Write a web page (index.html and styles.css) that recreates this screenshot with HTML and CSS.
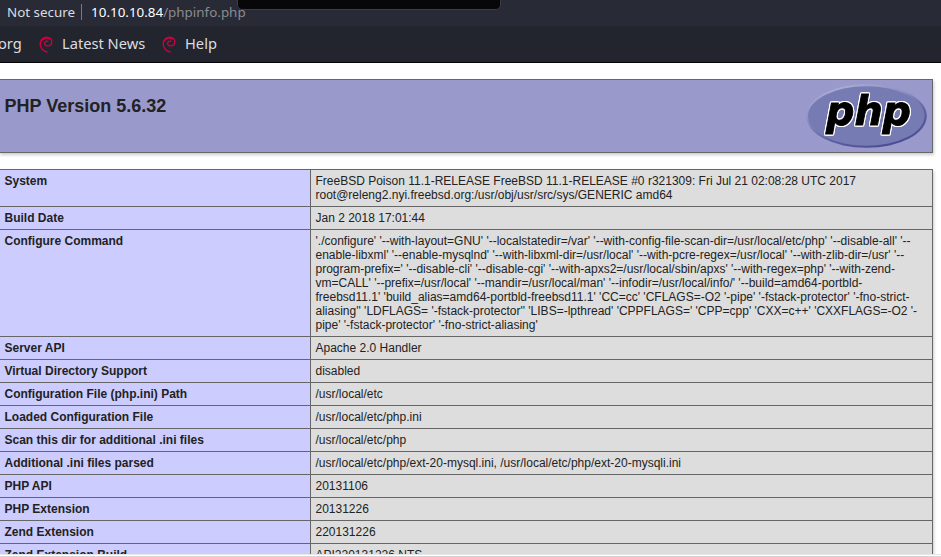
FILE: index.html
```html
<!DOCTYPE html>
<html lang="en">
<head>
<meta charset="utf-8">
<title>phpinfo()</title>
<link rel="stylesheet" href="styles.css">
</head>
<body>
<svg width="0" height="0" class="defs"><defs>
<symbol id="swirl" viewBox="0 0 14 17"><path fill="none" stroke="#cc0040" stroke-linecap="round" stroke-width="1.4" d="M8 16C4.8 15.4 1.4 12.6 1.2 8.5C1 4.5 3.6 1.3 7.4 1.2C10.8 1.1 13 3.3 12.8 6C12.6 8.6 10.6 10 8.4 9.9C6.4 9.8 5.2 8.3 5.7 6.7C6.1 5.5 7.3 4.9 8.7 5.2"/><path fill="none" stroke="#cc0040" stroke-width="1.5" d="M10.8 2.8C7.6 1.1 3.8 2.1 2.1 5.3"/></symbol>
</defs></svg>
<header class="browser">
  <div class="address"><span class="security">Not secure</span><span class="divider"></span><span class="host">10.10.10.84</span><span class="path">/phpinfo.php</span></div>
  <div class="popup"></div>
  <nav class="bookmarks">
    <span class="org">org</span>
    <svg class="deb"><use href="#swirl"/></svg><span class="news">Latest News</span>
    <svg class="deb"><use href="#swirl"/></svg><span>Help</span>
  </nav>
</header>
<main class="page">
  <section class="banner">
    <h1>PHP Version 5.6.32</h1>
    <svg class="logo" viewBox="0 0 121 64">
      <defs>
        <linearGradient id="rim" x1="0.2" y1="0" x2="0.75" y2="1"><stop offset="0" stop-color="#aeb2d5"/><stop offset=".35" stop-color="#8c8fc2"/><stop offset=".65" stop-color="#6062a2"/><stop offset="1" stop-color="#484893"/></linearGradient>
      </defs>
      <ellipse cx="60.5" cy="32" rx="60.3" ry="31.8" fill="url(#rim)"/>
      <ellipse cx="60.3" cy="32" rx="58.2" ry="29.8" fill="#777bb3"/>
      <text class="wordmark" x="20" y="40.5" textLength="85" lengthAdjust="spacingAndGlyphs">php</text>
    </svg>
  </section>
  <table>
    <tr><th>System</th><td>FreeBSD Poison 11.1-RELEASE FreeBSD 11.1-RELEASE #0 r321309: Fri Jul 21 02:08:28 UTC 2017<br>root@releng2.nyi.freebsd.org:/usr/obj/usr/src/sys/GENERIC amd64</td></tr>
    <tr><th>Build Date</th><td>Jan 2 2018 17:01:44</td></tr>
    <tr><th>Configure Command</th><td>'./configure' '--with-layout=GNU' '--localstatedir=/var' '--with-config-file-scan-dir=/usr/local/etc/php' '--disable-all' '--<br>enable-libxml' '--enable-mysqlnd' '--with-libxml-dir=/usr/local' '--with-pcre-regex=/usr/local' '--with-zlib-dir=/usr' '--<br>program-prefix=' '--disable-cli' '--disable-cgi' '--with-apxs2=/usr/local/sbin/apxs' '--with-regex=php' '--with-zend-<br>vm=CALL' '--prefix=/usr/local' '--mandir=/usr/local/man' '--infodir=/usr/local/info/' '--build=amd64-portbld-<br>freebsd11.1' 'build_alias=amd64-portbld-freebsd11.1' 'CC=cc' 'CFLAGS=-O2 '-pipe' '-fstack-protector' '-fno-strict-<br>aliasing'' 'LDFLAGS= '-fstack-protector'' 'LIBS=-lpthread' 'CPPFLAGS=' 'CPP=cpp' 'CXX=c++' 'CXXFLAGS=-O2 '-<br>pipe' '-fstack-protector' '-fno-strict-aliasing'</td></tr>
    <tr><th>Server API</th><td>Apache 2.0 Handler</td></tr>
    <tr><th>Virtual Directory Support</th><td>disabled</td></tr>
    <tr><th>Configuration File (php.ini) Path</th><td>/usr/local/etc</td></tr>
    <tr><th>Loaded Configuration File</th><td>/usr/local/etc/php.ini</td></tr>
    <tr><th>Scan this dir for additional .ini files</th><td>/usr/local/etc/php</td></tr>
    <tr><th>Additional .ini files parsed</th><td>/usr/local/etc/php/ext-20-mysql.ini, /usr/local/etc/php/ext-20-mysqli.ini</td></tr>
    <tr><th>PHP API</th><td>20131106</td></tr>
    <tr><th>PHP Extension</th><td>20131226</td></tr>
    <tr><th>Zend Extension</th><td>220131226</td></tr>
    <tr><th>Zend Extension Build</th><td>API220131226,NTS</td></tr>
  </table>
</main>
<footer class="edge"></footer>
</body>
</html>
```

FILE: styles.css
```css
* { box-sizing: border-box; }
body {
  margin: 0;
  width: 941px;
  height: 557px;
  overflow: hidden;
  display: flex;
  flex-direction: column;
  background: #fff;
  color: #222;
  font-family: "Liberation Sans", Arial, sans-serif;
}
.defs { position: absolute; }
.browser {
  position: relative;
  flex: none;
  height: 63px;
  background: #23252e;
  border-bottom: 1px solid #050507;
  color: #dcdde0;
  font-family: "Noto Sans", sans-serif;
  font-size: 14.67px;
  white-space: nowrap;
}
.address {
  display: flex;
  align-items: center;
  height: 26px;
  padding: 0 0 2px 7px;
  background: #282a35;
  font-size: 13.4px;
}
.divider { width: 1px; height: 16px; margin: 0 9px 0 6px; background: #777983; }
.host { color: #fff; }
.path { color: #8b8c91; }
.popup {
  position: absolute;
  left: 237px;
  top: -10px;
  width: 264px;
  height: 20px;
  background: #070709;
  border: 1px solid #3b3c45;
  border-radius: 5px;
}
.bookmarks { display: flex; align-items: center; height: 36px; }
.bookmarks span { margin-top: -2px; }
.bookmarks .org { width: 40px; margin-left: -2px; }
.deb { width: 14px; height: 17px; flex: none; margin: 0 9px 0 1px; }
.news { width: 99px; }
.page { flex: none; height: 491px; padding-top: 16px; overflow: hidden; }
.banner {
  display: flex;
  justify-content: space-between;
  width: 934px;
  height: 74px;
  margin-left: -1px;
  padding: 4px 5px 4px 4.5px;
  background: #9999cc;
  border: 1px solid #666;
  box-shadow: 1px 2px 3px #ccc;
}
h1 { margin: 12px 0 0; font-size: 18px; line-height: 20px; }
.logo { width: 121px; height: 64px; }
.wordmark {
  font: italic bold 41px "DejaVu Sans", sans-serif;
  fill: #000;
  stroke: #000;
  stroke-width: 1px;
  filter: drop-shadow(1px 0 0 #fff) drop-shadow(-1px 0 0 #fff) drop-shadow(0 1px 0 #fff) drop-shadow(0 -1px 0 #fff);
}
table {
  width: 934px;
  margin: 16px 0 0 -1px;
  border-collapse: collapse;
  table-layout: fixed;
  box-shadow: 1px 2px 3px #ccc;
  font-size: 12px;
  line-height: 14px;
}
th, td { border: 1px solid #666; padding: 4px 5px 4px 4.5px; vertical-align: top; text-align: left; white-space: nowrap; }
th { width: 311px; background: #ccccff; }
td { background: #ddd; }
.edge { flex: none; height: 3px; background: #fff; border-top: 1px solid #e6e6e6; border-bottom: 1px solid #d4d4d4; }
```
